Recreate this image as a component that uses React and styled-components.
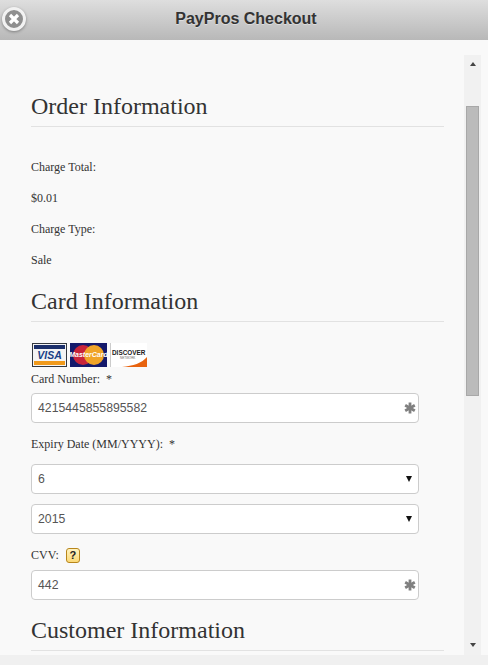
import React from "react"
import styled, { createGlobalStyle } from "styled-components"

const GlobalStyle = createGlobalStyle`
  html, body {
    margin: 0;
    padding: 0;
    height: 100%;
    overflow: hidden;
    background: #f0f0f0;
  }
`

const Page = styled.div`
  width: 488px;
  height: 665px;
  display: flex;
  flex-direction: column;
  overflow: hidden;
  font-family: "Liberation Serif", serif;
  color: #333;
`

const Header = styled.header`
  position: relative;
  flex: 0 0 40px;
  box-sizing: border-box;
  padding: 0 0 3px 4px;
  display: flex;
  align-items: center;
  justify-content: center;
  background: linear-gradient(#dedede, #b8b8b8);
  font: bold 16px "Liberation Sans", sans-serif;
  color: #333;
  text-shadow: 0 1px 0 #ddd;
`

const CloseButton = styled.div`
  position: absolute;
  left: 2px;
  top: 7px;
  width: 24px;
  height: 24px;
  border-radius: 50%;
  border: 3px solid #f2f2f2;
  box-sizing: border-box;
  background: #8f8f8f;
  box-shadow: 0 1px 3px rgba(0, 0, 0, 0.35);
  display: flex;
  align-items: center;
  justify-content: center;
`

const Middle = styled.div`
  flex: 0 0 615px;
  display: flex;
  background: #f9f9f9;
  overflow: hidden;
`

const Content = styled.main`
  flex: 0 0 464px;
  box-sizing: border-box;
  padding: 50px 20px 0 31px;
  overflow: hidden;
`

const SectionTitle = styled.h2`
  margin: 0;
  height: 37px;
  box-sizing: border-box;
  border-bottom: 1px solid #e2e2e2;
  font-size: 24px;
  font-weight: 400;
  line-height: 32px;
  color: #333;
`

const OrderList = styled.div`
  padding-top: 25px;
  margin-bottom: 9px;
`

const OrderLine = styled.div`
  height: 31px;
  font-size: 12px;
  line-height: 31px;
`

const CardLogos = styled.div`
  display: flex;
  gap: 3px;
  margin: 21px 0 0 1px;
  height: 24px;
`

const FieldLabel = styled.div`
  display: flex;
  align-items: center;
  gap: ${(p) => p.$gap || 6}px;
  height: 16px;
  font-size: 12px;
  line-height: 16px;
  margin: ${(p) => p.$top || 4}px 0 ${(p) => p.$bottom || 6}px;
`

const Star = styled.span`
  font-size: 12px;
  color: #333;
`

const FieldBox = styled.div`
  position: relative;
  width: 388px;
  height: 30px;
  box-sizing: border-box;
  display: flex;
  align-items: center;
  justify-content: space-between;
  padding: 0 6px;
  margin-bottom: ${(p) => p.$bottom || 0}px;
  background: #fff;
  border: 1px solid #ccc;
  border-radius: 4px;
  font: 12.25px "Liberation Sans", sans-serif;
  color: #555;
`

const RequiredMark = styled.span`
  display: flex;
  margin-right: -4px;
`

const SelectArrow = styled.span`
  width: 0;
  height: 0;
  border-left: 3.5px solid transparent;
  border-right: 3.5px solid transparent;
  border-top: 6px solid #111;
`

const HelpBadge = styled.span`
  width: 14px;
  height: 15px;
  box-sizing: border-box;
  display: flex;
  align-items: center;
  justify-content: center;
  border: 1px solid #b8861b;
  border-radius: 3px;
  background: linear-gradient(#fff3c0, #fbd977);
  font: bold 11px "Liberation Sans", sans-serif;
  color: #222;
`

const Spaced = styled.div`
  margin-top: ${(p) => p.$top}px;
`

const Scrollbar = styled.div`
  flex: 0 0 17px;
  margin-top: 15px;
  display: flex;
  flex-direction: column;
  align-items: center;
  background: #f1f1f1;
`

const ScrollButton = styled.div`
  flex: 0 0 ${(p) => p.$height}px;
  display: flex;
  align-items: center;
  justify-content: center;
`

const ScrollThumb = styled.div`
  flex: 0 0 290px;
  width: 13px;
  margin-top: 33px;
  box-sizing: border-box;
  background: #bbb;
  border: 1px solid #a8a8a8;
`

const ScrollTrack = styled.div`
  flex: 1;
`

const ArrowUp = styled.span`
  border-left: 3.5px solid transparent;
  border-right: 3.5px solid transparent;
  border-bottom: 4px solid #444;
`

const ArrowDown = styled.span`
  border-left: 3.5px solid transparent;
  border-right: 3.5px solid transparent;
  border-top: 4px solid #444;
`

const Footer = styled.div`
  flex: 1;
  background: #f0f0f0;
`

const Asterisk = () => (
  <RequiredMark>
    <svg width="12" height="12" viewBox="0 0 12 12">
      <g stroke="#808080" strokeWidth="2.8">
        <path d="M6 .5v11" />
        <path d="M1.2 3.2l9.6 5.6" />
        <path d="M10.8 3.2l-9.6 5.6" />
      </g>
    </svg>
  </RequiredMark>
)

const CloseIcon = () => (
  <svg width="12" height="12" viewBox="0 0 12 12">
    <path d="M2 2l8 8M10 2l-8 8" stroke="#fff" strokeWidth="3.2" />
  </svg>
)

const VisaLogo = () => (
  <svg width="35" height="24" viewBox="0 0 35 24">
    <rect x="0.5" y="0.5" width="34" height="23" fill="#f4f4f4" stroke="#33383f" />
    <rect x="2" y="2" width="31" height="4" fill="#1b2f6b" />
    <rect x="2" y="18" width="31" height="4" fill="#f09a1c" />
    <text x="17.5" y="16" textAnchor="middle" fontFamily="Liberation Sans" fontSize="10.5" fontWeight="700" fontStyle="italic" fill="#1b3f87">VISA</text>
  </svg>
)

const MasterLogo = () => (
  <svg width="37" height="24" viewBox="0 0 37 24">
    <rect width="37" height="24" fill="#14196b" />
    <circle cx="13" cy="12" r="10" fill="#c8243a" />
    <circle cx="24" cy="12" r="10" fill="#f0a428" />
    <text x="18.5" y="14" textAnchor="middle" fontFamily="Liberation Sans" fontSize="7" fontWeight="700" fontStyle="italic" fill="#fff">MasterCard</text>
  </svg>
)

const DiscoverLogo = () => (
  <svg width="37" height="24" viewBox="0 0 37 24">
    <rect width="37" height="24" fill="#fff" />
    <path d="M.5 0v24" stroke="#ccc" />
    <path d="M37 14v10H12c11-1 20-4 25-10z" fill="#e8630f" />
    <text x="2" y="12" fontFamily="Liberation Sans" fontSize="6.4" fontWeight="700" fill="#222">DISCOVER</text>
    <text x="10" y="16" fontFamily="Liberation Sans" fontSize="3" fill="#666">NETWORK</text>
  </svg>
)

const App = () => (
  <Page>
    <GlobalStyle />
    <Header>
      <CloseButton>
        <CloseIcon />
      </CloseButton>
      PayPros Checkout
    </Header>
    <Middle>
      <Content>
        <SectionTitle>Order Information</SectionTitle>
        <OrderList>
          <OrderLine>Charge Total:</OrderLine>
          <OrderLine>$0.01</OrderLine>
          <OrderLine>Charge Type:</OrderLine>
          <OrderLine>Sale</OrderLine>
        </OrderList>
        <SectionTitle>Card Information</SectionTitle>
        <CardLogos>
          <VisaLogo />
          <MasterLogo />
          <DiscoverLogo />
        </CardLogos>
        <FieldLabel>
          Card Number: <Star>*</Star>
        </FieldLabel>
        <FieldBox>
          4215445855895582
          <Asterisk />
        </FieldBox>
        <FieldLabel $top={13}>
          Expiry Date (MM/YYYY): <Star>*</Star>
        </FieldLabel>
        <Spaced $top={12}>
          <FieldBox $bottom={10}>
            6
            <SelectArrow />
          </FieldBox>
          <FieldBox>
            2015
            <SelectArrow />
          </FieldBox>
        </Spaced>
        <FieldLabel $top={13} $bottom={7} $gap={7}>
          CVV: <HelpBadge>?</HelpBadge>
        </FieldLabel>
        <FieldBox>
          442
          <Asterisk />
        </FieldBox>
        <Spaced $top={14}>
          <SectionTitle>Customer Information</SectionTitle>
        </Spaced>
      </Content>
      <Scrollbar>
        <ScrollButton $height={18}>
          <ArrowUp />
        </ScrollButton>
        <ScrollThumb />
        <ScrollTrack />
        <ScrollButton $height={20}>
          <ArrowDown />
        </ScrollButton>
      </Scrollbar>
    </Middle>
    <Footer />
  </Page>
)

export default App
